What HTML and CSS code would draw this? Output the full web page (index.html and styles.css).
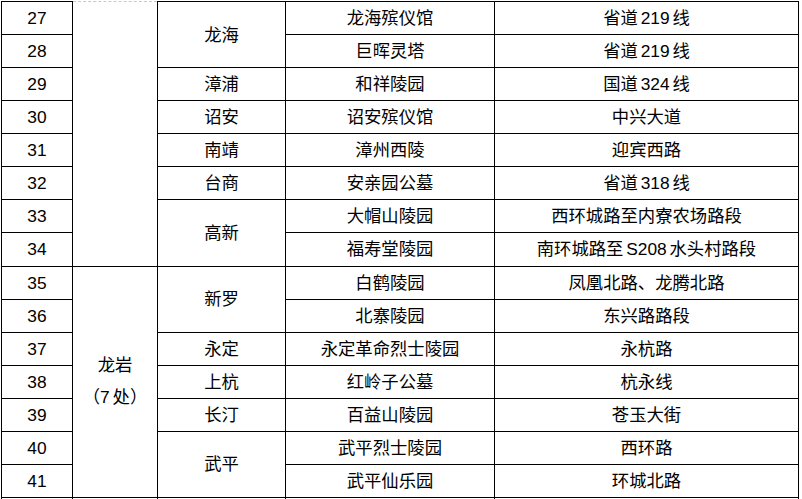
FILE: index.html
```html
<!DOCTYPE html>
<html lang="zh-CN">
<head>
<meta charset="utf-8">
<title>陵园列表</title>
<link rel="stylesheet" href="styles.css">
</head>
<body>
<table class="grid">
  <colgroup>
    <col class="c-no">
    <col class="c-city">
    <col class="c-dist">
    <col class="c-name">
    <col class="c-road">
  </colgroup>
  <tbody>
    <tr><td>27</td><td class="city city-top" rowspan="8"></td><td rowspan="2">龙海</td><td>龙海殡仪馆</td><td>省道 219 线</td></tr>
    <tr><td>28</td><td>巨晖灵塔</td><td>省道 219 线</td></tr>
    <tr><td>29</td><td>漳浦</td><td>和祥陵园</td><td>国道 324 线</td></tr>
    <tr><td>30</td><td>诏安</td><td>诏安殡仪馆</td><td>中兴大道</td></tr>
    <tr><td>31</td><td>南靖</td><td>漳州西陵</td><td>迎宾西路</td></tr>
    <tr><td>32</td><td>台商</td><td>安亲园公墓</td><td>省道 318 线</td></tr>
    <tr><td>33</td><td rowspan="2">高新</td><td>大帽山陵园</td><td>西环城路至内寮农场路段</td></tr>
    <tr><td>34</td><td>福寿堂陵园</td><td>南环城路至 S208 水头村路段</td></tr>
    <tr><td>35</td><td class="city city-two" rowspan="7">龙岩<br>（7 处）</td><td rowspan="2">新罗</td><td>白鹤陵园</td><td>凤凰北路、龙腾北路</td></tr>
    <tr><td>36</td><td>北寨陵园</td><td>东兴路路段</td></tr>
    <tr><td>37</td><td>永定</td><td>永定革命烈士陵园</td><td>永杭路</td></tr>
    <tr><td>38</td><td>上杭</td><td>红岭子公墓</td><td>杭永线</td></tr>
    <tr><td>39</td><td>长汀</td><td>百益山陵园</td><td>苍玉大街</td></tr>
    <tr><td>40</td><td rowspan="2">武平</td><td>武平烈士陵园</td><td>西环路</td></tr>
    <tr><td>41</td><td>武平仙乐园</td><td>环城北路</td></tr>
    <tr class="tail"><td></td><td></td><td></td><td></td><td></td></tr>
  </tbody>
</table>
</body>
</html>
```

FILE: styles.css
```css
html, body {
  margin: 0;
  padding: 0;
  background: #ffffff;
  overflow: hidden;
}

body {
  width: 802px;
  height: 499px;
  font-family: "Liberation Sans", "Noto Sans CJK SC", sans-serif;
  font-size: 17.33px;
  color: #000000;
}

.grid {
  border-collapse: collapse;
  table-layout: fixed;
  width: 797px;
  margin: 1px 0 0 1px;
}

.c-no { width: 71px; }
.c-city { width: 85px; }
.c-dist { width: 128px; }
.c-name { width: 209px; }
.c-road { width: 304px; }

.grid td {
  border: 1px solid #000000;
  padding: 0;
  height: 32.07px;
  text-align: center;
  vertical-align: middle;
  white-space: nowrap;
  word-spacing: -2px;
  line-height: 24px;
}

.grid .city-top {
  border-top: 1px dashed #c8c8c8;
}

.grid .city-two {
  line-height: 32px;
  padding-bottom: 1px;
}

.tail td {
  height: 20px;
}
```
